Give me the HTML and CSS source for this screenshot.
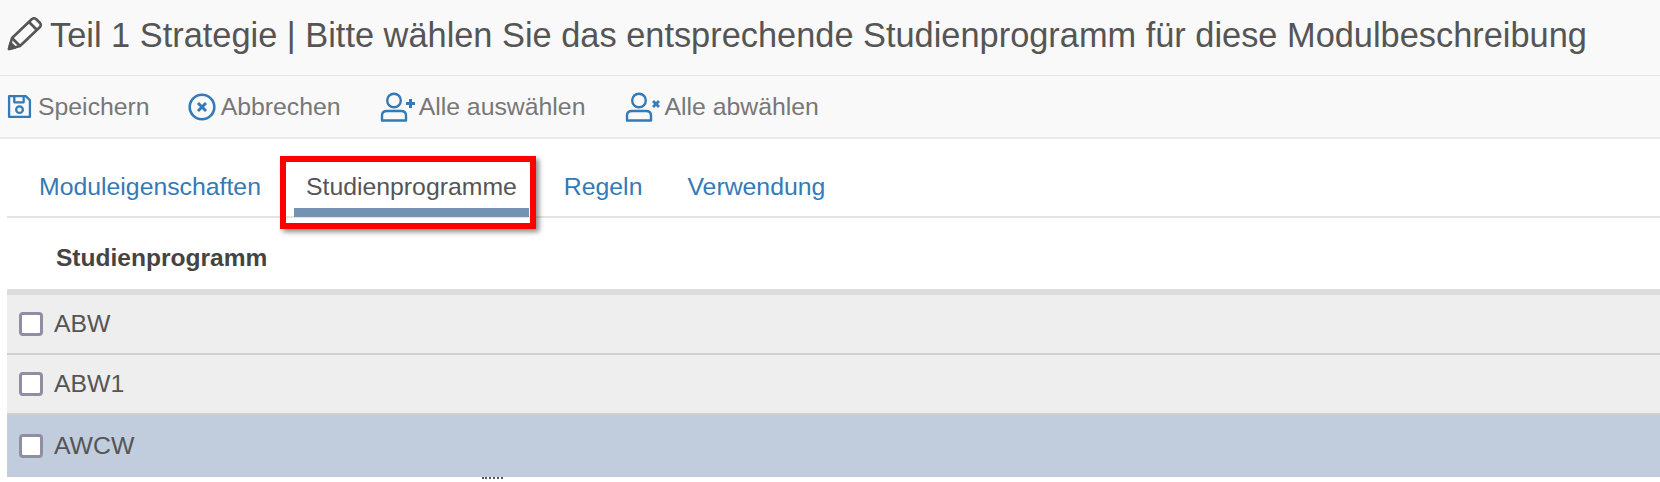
FILE: index.html
```html
<!DOCTYPE html>
<html lang="de">
<head>
    <meta charset="UTF-8">
    <meta name="viewport" content="width=device-width, initial-scale=1.0">
    <title>Teil 1 Strategie</title>
    <link rel="stylesheet" href="styles.css">
</head>
<body>

    <div class="title-bar">
        <svg class="icon-pencil" viewBox="0 0 36 36" fill="none" stroke="#555" stroke-width="2.6" stroke-linejoin="round">
            <path d="M3 33 L6 22 L26 3 Q28 1.500 30 3 L34 7 Q35.500 9 34 11 L14 30 Z"/>
            <path d="M23 6 L31 14"/>
            <path d="M6 22 L14 30"/>
            <path d="M4.500 27 L9 31.500 L3 33 Z" fill="#555"/>
        </svg>
        <h1>Teil 1 Strategie | Bitte wählen Sie das entsprechende Studienprogramm für diese Modulbeschreibung</h1>
    </div>

    <div class="toolbar">
        <a class="tool tool-save">
            <svg class="icon-save" viewBox="0 0 24 24" fill="none" stroke="#337ab7" stroke-width="2.200" stroke-linejoin="round">
                <path d="M2 2 H18 L22 6 V22 H2 Z"/>
                <path d="M7 2 V8 H16 V2"/>
                <circle cx="12" cy="15" r="3.200"/>
            </svg>
            Speichern
        </a>
        <a class="tool tool-cancel">
            <svg class="icon-cancel" viewBox="0 0 28 28" fill="none" stroke="#337ab7">
                <circle cx="14" cy="14" r="12.300" stroke-width="2.600"/>
                <path d="M10 10 L18 18 M18 10 L10 18" stroke-width="3"/>
            </svg>
            Abbrechen
        </a>
        <a class="tool tool-all">
            <svg class="icon-user" viewBox="0 0 35 30" fill="none" stroke="#337ab7" stroke-width="2.400">
                <circle cx="14" cy="8.500" r="6.800"/>
                <path d="M2 28.500 V23.500 Q2 19 7 19 H21 Q26 19 26 23.500 V28.500 Z" stroke-linejoin="round"/>
                <path d="M26 11.500 H35 M30.500 7 V16" stroke-width="3"/>
            </svg>
            Alle auswählen
        </a>
        <a class="tool">
            <svg class="icon-user" viewBox="0 0 35 30" fill="none" stroke="#337ab7" stroke-width="2.400">
                <circle cx="14" cy="8.500" r="6.800"/>
                <path d="M2 28.500 V23.500 Q2 19 7 19 H21 Q26 19 26 23.500 V28.500 Z" stroke-linejoin="round"/>
                <path d="M28 9 L34 15 M34 9 L28 15" stroke-width="2.800"/>
            </svg>
            Alle abwählen
        </a>
    </div>

    <div class="content">
        <ul class="tabs">
            <li class="tab"><a>Moduleigenschaften</a></li>
            <li class="tab active"><a>Studienprogramme</a><span class="marker"></span></li>
            <li class="tab"><a>Regeln</a></li>
            <li class="tab"><a>Verwendung</a></li>
        </ul>

        <div class="table-head">Studienprogramm</div>
        <div class="row"><span class="check"></span>ABW</div>
        <div class="row"><span class="check"></span>ABW1</div>
        <div class="row selected"><span class="check"></span>AWCW</div>
    </div>
    <div class="dots"></div>

</body>
</html>
```
FILE: styles.css
```css
body {
    font-family: "Liberation Sans", Arial, sans-serif;
    background-color: #fff;
    color: #555;
    margin: 0;
    height: 482px;
    overflow: hidden;
}
.title-bar {
    display: flex;
    align-items: center;
    height: 71px;
    padding: 0 0 4px 6px;
    background-color: #f9f9f9;
    border-bottom: 1px solid #e6e6e6;
}
.icon-pencil {
    width: 36px;
    height: 36px;
    margin: 0 8px 3px 0;
}
h1 {
    margin: 0;
    font-size: 34.36px;
    font-weight: normal;
    white-space: nowrap;
}
.toolbar {
    display: flex;
    align-items: center;
    height: 61px;
    padding-left: 7px;
    background-color: #f9f9f9;
    border-bottom: 2px solid #ebebeb;
}
.tool {
    display: flex;
    align-items: center;
    font-size: 24.8px;
    color: #777;
}
.tool svg {
    margin-right: 4px;
}
.tool-save {
    margin-right: 38px;
}
.tool-cancel {
    margin-right: 39px;
}
.tool-all {
    margin-right: 40px;
}
.tool .icon-save {
    width: 25px;
    height: 25px;
    margin-right: 6px;
}
.tool .icon-cancel {
    width: 28px;
    height: 28px;
    margin-right: 5px;
}
.icon-user {
    width: 35px;
    height: 30px;
}
.content {
    padding-left: 7px;
}
.tabs {
    display: flex;
    list-style: none;
    margin: 0;
    padding: 0 0 0 20px;
    height: 79px;
    border-bottom: 2px solid #e4e4e4;
    box-sizing: border-box;
}
.tab {
    position: relative;
    padding: 0 12px;
    margin-right: 21px;
    font-size: 24.8px;
    line-height: 95px;
    color: #337ab7;
    white-space: nowrap;
}
.active {
    margin-right: 23px;
    color: #555;
}
.marker {
    position: absolute;
    left: 0;
    right: 0;
    top: 69px;
    height: 9px;
    background-color: #7393b3;
}
.active::after {
    content: "";
    position: absolute;
    left: -14px;
    right: -7px;
    top: 17px;
    height: 73px;
    border: 6px solid #f00;
    box-sizing: border-box;
    box-shadow: 3px 3px 5px rgba(0, 0, 0, 0.45);
}
.table-head {
    height: 71px;
    line-height: 79px;
    padding-left: 49px;
    font-size: 24.56px;
    font-weight: bold;
    color: #444;
    border-bottom: 6px solid #dcdcdc;
}
.row {
    display: flex;
    align-items: center;
    height: 58px;
    padding-left: 12px;
    font-size: 24.8px;
    background-color: #eee;
    border-bottom: 2px solid #d0d0d0;
}
.selected {
    height: 62px;
    background-color: #c1cddd;
    border-bottom: none;
}
.check {
    width: 24px;
    height: 24px;
    margin-right: 11px;
    background-color: #fff;
    border: 3px solid #8f8fa3;
    border-radius: 4px;
    box-sizing: border-box;
}
.dots {
    width: 21px;
    margin-left: 482px;
    border-top: 2px dotted #555;
}
```
